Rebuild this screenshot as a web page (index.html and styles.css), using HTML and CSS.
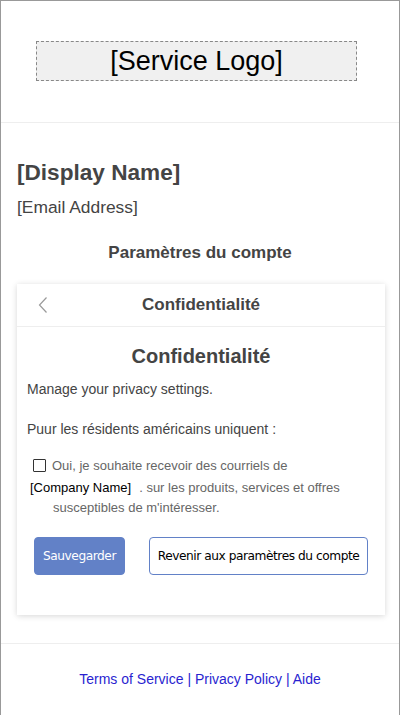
FILE: index.html
```html
<!DOCTYPE html>
<html lang="fr">
<head>
<meta charset="utf-8">
<title>Confidentialité</title>
<link rel="stylesheet" href="styles.css">
</head>
<body>
<div class="page">
  <header class="top">
    <div class="logo">[Service Logo]</div>
  </header>

  <section class="profile">
    <h1 class="name">[Display Name]</h1>
    <div class="email">[Email Address]</div>
  </section>

  <h2 class="section-title">Paramètres du compte</h2>

  <div class="card">
    <div class="card-head">
      <a class="back" href="#" aria-label="Retour">
        <svg width="10" height="16" viewBox="0 0 10 16"><polyline points="8.5,0.5 1.5,8 8.5,15.5" fill="none" stroke="#9a9a9a" stroke-width="1.2"/></svg>
      </a>
      <div class="card-head-title">Confidentialité</div>
    </div>
    <div class="card-body">
      <h3 class="card-title">Confidentialité</h3>
      <p class="text">Manage your privacy settings.</p>
      <p class="text gap">Puur les résidents américains uniquent :</p>
      <div class="consent">
        <label class="consent-line"><input type="checkbox" class="check"><span>Oui, je souhaite recevoir des courriels de</span></label>
        <div class="consent-line2"><span class="company">[Company Name]</span><span>. sur les produits, services et offres</span></div>
        <div class="consent-line3">susceptibles de m'intéresser.</div>
      </div>
      <div class="actions">
        <button class="btn btn-primary" type="button">Sauvegarder</button>
        <button class="btn btn-outline" type="button">Revenir aux paramètres du compte</button>
      </div>
    </div>
  </div>

  <footer class="foot">
    <a href="#">Terms of Service</a> | <a href="#">Privacy Policy</a> | <a href="#">Aide</a>
  </footer>
</div>
</body>
</html>
```

FILE: styles.css
```css
html, body {
  margin: 0;
  padding: 0;
  background: #fff;
}
body {
  font-family: "Liberation Sans", Arial, sans-serif;
  color: #444;
}
.page {
  box-sizing: border-box;
  width: 400px;
  min-height: 760px;
  border: 1px solid #999;
  border-bottom: none;
}
.top {
  padding: 40px 0 41px;
  border-bottom: 1px solid #eee;
}
.logo {
  box-sizing: border-box;
  width: 321px;
  height: 40px;
  margin-left: 35px;
  border: 1px dashed #888;
  background: #f0f0f0;
  color: #000;
  font-size: 27px;
  line-height: 38px;
  text-align: center;
}
.profile {
  padding: 0 16px;
}
.name {
  margin: 37px 0 0;
  font-size: 22.6px;
  line-height: 25px;
  font-weight: bold;
  color: #444;
}
.email {
  margin-top: 12px;
  font-size: 17.4px;
  line-height: 20px;
}
.section-title {
  margin: 26px 0 0;
  font-size: 17px;
  line-height: 20px;
  font-weight: bold;
  text-align: center;
  color: #444;
}
.card {
  margin: 21px 14px 0 16px;
  background: #fff;
  box-shadow: 0 1px 6px rgba(0,0,0,0.16);
}
.card-head {
  position: relative;
  height: 42px;
  border-bottom: 1px solid #eee;
  display: flex;
  align-items: center;
  justify-content: center;
}
.back {
  position: absolute;
  left: 21px;
  top: 13px;
  display: block;
  line-height: 0;
}
.card-head-title {
  font-size: 17px;
  font-weight: bold;
  color: #444;
}
.card-body {
  padding: 17px 10px 40px;
}
.card-title {
  margin: 0;
  font-size: 20px;
  line-height: 24px;
  font-weight: bold;
  text-align: center;
  color: #444;
}
.text {
  margin: 11px 0 0;
  font-size: 14px;
  line-height: 20px;
  color: #444;
}
.text.gap {
  margin-top: 20px;
}
.consent {
  margin-top: 17px;
  padding-left: 26px;
  font-size: 13px;
  line-height: 20px;
  color: #666;
}
.consent-line {
  display: flex;
  align-items: center;
  margin-left: -20px;
}
.check {
  -webkit-appearance: none;
  appearance: none;
  box-sizing: border-box;
  width: 13px;
  height: 13px;
  margin: 0 6px 0 0;
  border: 1px solid #333;
  background: #fff;
  border-radius: 1px;
  position: relative;
  top: -1px;
}
.consent-line2 {
  display: flex;
  gap: 8px;
  margin: 2px 0 0 -23px;
}
.company {
  color: #000;
}
.actions {
  display: flex;
  gap: 24px;
  margin-top: 19px;
  padding-left: 7px;
}
.btn {
  box-sizing: border-box;
  height: 38px;
  padding: 0 4px;
  border-radius: 4px;
  font-family: "DejaVu Sans", Verdana, sans-serif;
  font-size: 12.2px;
  letter-spacing: -0.45px;
  white-space: nowrap;
  text-align: center;
}
.btn-primary {
  width: 91px;
  background: #6281c7;
  border: 1px solid #6281c7;
  color: #fff;
}
.btn-outline {
  width: 219px;
  background: #fff;
  border: 1px solid #6281c7;
  color: #000;
}
.foot {
  margin-top: 28px;
  border-top: 1px solid #eee;
  padding-top: 27px;
  font-size: 14px;
  line-height: 16px;
  text-align: center;
  color: #2a1fd0;
}
.foot a {
  color: #2a1fd0;
  text-decoration: none;
}
```
